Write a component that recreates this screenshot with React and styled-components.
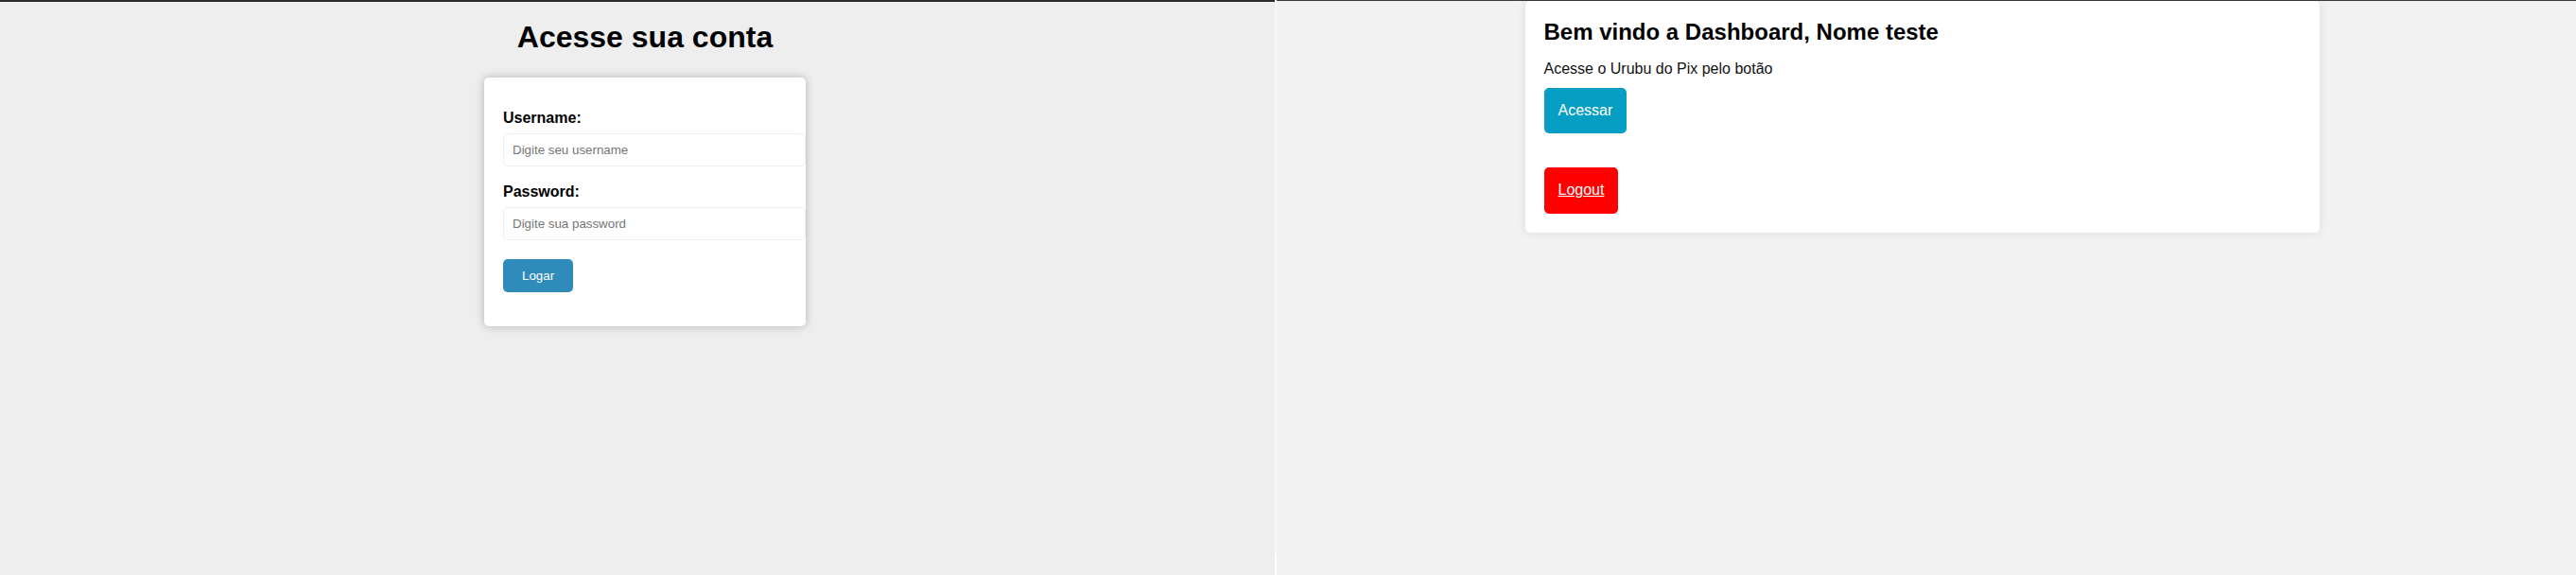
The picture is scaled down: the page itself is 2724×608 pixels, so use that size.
import React from "react";
import styled, { createGlobalStyle } from "styled-components";

const GlobalStyle = createGlobalStyle`
  html, body {
    margin: 0;
    padding: 0;
    font-family: "Liberation Sans", Arial, sans-serif;
  }
`;

const Screen = styled.div`
  display: flex;
  width: 2724px;
  height: 608px;
  overflow: hidden;
`;

const LoginPane = styled.div`
  width: 1348px;
  box-sizing: border-box;
  padding-left: 16px;
  background: #eeeeee;
  border-top: 2px solid #2b2b2b;
  display: flex;
  flex-direction: column;
  align-items: center;
`;

const Divider = styled.div`
  width: 2px;
  height: 586px;
  background: #f7f7f7;
`;

const DashPane = styled.div`
  flex: 1;
  box-sizing: border-box;
  padding-right: 9px;
  background: #f2f2f2;
  border-top: 1px solid #3a3a3a;
  display: flex;
  justify-content: center;
  align-items: flex-start;
`;

const Title = styled.h1`
  font-size: 32px;
  font-weight: bold;
  color: #000;
  margin: 19px 0 24px;
  line-height: 37px;
`;

const LoginCard = styled.form`
  width: 300px;
  padding: 34px 20px 36px;
  background: #fff;
  border-radius: 5px;
  box-shadow: 0 0 10px rgba(0, 0, 0, 0.25);
`;

const Label = styled.label`
  display: block;
  font-size: 16px;
  font-weight: bold;
  line-height: 18px;
  color: #000;
  margin-bottom: 7px;
`;

const Input = styled.input`
  display: block;
  width: 100%;
  padding: 9px;
  border: 1px solid #efefef;
  border-radius: 5px;
  font-family: "Liberation Sans", Arial, sans-serif;
  font-size: 13.33px;
  line-height: 15px;
  background: #fff;
  margin-bottom: ${(p) => p.$gap}px;
  outline: none;

  &::placeholder {
    color: #757575;
  }
`;

const SubmitButton = styled.button`
  background: #2e8bba;
  color: #fff;
  border: none;
  border-radius: 5px;
  padding: 10px 20px;
  font-family: "Liberation Sans", Arial, sans-serif;
  font-size: 13.33px;
  line-height: 15px;
  cursor: pointer;
`;

const DashCard = styled.div`
  width: 800px;
  padding: 19px 20px 20px;
  background: #fff;
  border-radius: 5px;
  box-shadow: 0 0 10px rgba(0, 0, 0, 0.1);
`;

const Welcome = styled.h2`
  font-size: 24px;
  font-weight: bold;
  color: #000;
  margin: 0 0 16px;
  line-height: 27.6px;
`;

const Text = styled.p`
  font-size: 16px;
  color: #111;
  margin: 0 0 11px;
  line-height: 18.4px;
`;

const ActionButton = styled.a`
  display: table;
  background: ${(p) => p.$bg};
  color: #fff;
  text-decoration: ${(p) => (p.$underline ? "underline" : "none")};
  border-radius: 5px;
  padding: 15px;
  font-size: 16px;
  line-height: 18.4px;
  margin-top: ${(p) => p.$top || 0}px;
  cursor: pointer;
`;

export default function App() {
  return (
    <>
      <GlobalStyle />
      <Screen>
        <LoginPane>
          <Title>Acesse sua conta</Title>
          <LoginCard onSubmit={(e) => e.preventDefault()}>
            <Label htmlFor="username">Username:</Label>
            <Input id="username" placeholder="Digite seu username" $gap={18} />
            <Label htmlFor="password">Password:</Label>
            <Input
              id="password"
              type="password"
              placeholder="Digite sua password"
              $gap={20}
            />
            <SubmitButton type="submit">Logar</SubmitButton>
          </LoginCard>
        </LoginPane>
        <Divider />
        <DashPane>
          <DashCard>
            <Welcome>Bem vindo a Dashboard, Nome teste</Welcome>
            <Text>Acesse o Urubu do Pix pelo botão</Text>
            <ActionButton $bg="#079ec3">Acessar</ActionButton>
            <ActionButton $bg="#ff0000" $underline $top={36} href="#">
              Logout
            </ActionButton>
          </DashCard>
        </DashPane>
      </Screen>
    </>
  );
}
